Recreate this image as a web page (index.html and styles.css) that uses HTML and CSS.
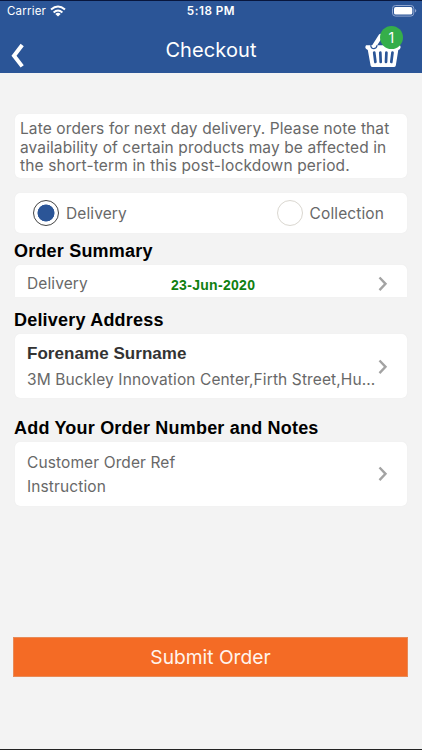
FILE: index.html
```html
<!DOCTYPE html>
<html lang="en">
<head>
<meta charset="utf-8">
<title>Checkout</title>
<link rel="stylesheet" href="styles.css">
</head>
<body>
<header class="header">
  <div class="status">
    <div class="carrier"><span class="carrier-name">Carrier</span>
      <svg class="wifi" viewBox="0 0 16 12" width="16" height="12"><g fill="none" stroke="#fff" stroke-width="2"><path d="M1 4.6Q8-1.7 15 4.6"/><path d="M3.6 7.4Q8 3.5 12.4 7.4"/></g><path d="M8 11.6 5.3 8.9Q8 6.8 10.7 8.9Z" fill="#fff"/></svg>
    </div>
    <span class="time">5:18 PM</span>
    <svg class="battery" viewBox="0 0 25 12" width="25" height="12"><rect x=".5" y=".5" width="21.3" height="10.6" rx="3" fill="none" stroke="#8fa5cf"/><rect x="2" y="2" width="18.3" height="7.6" rx="1.7" fill="#fff"/><path d="M23 4q1.3.6 1.3 1.8T23 7.6Z" fill="#8fa5cf"/></svg>
  </div>
  <nav class="nav">
    <svg class="back" viewBox="0 0 14 26" width="14" height="26"><path d="M11.2 2 3 12.7l8.2 10.7" fill="none" stroke="#fff" stroke-width="4"/></svg>
    <h1 class="title">Checkout</h1>
    <div class="basket">
      <svg viewBox="0 0 38 36" width="38" height="36"><path d="M2 13.200h34q1.800 3.300-1.700 4.800l-2.500 15.400Q31.500 35 29.800 35H8.600Q7 35 6.600 33.400L3.800 18Q0 16.300 2 13.200Z" fill="#fff"/><path d="M9.800 14.600 16.600 4" stroke="#fff" stroke-width="4.200" stroke-linecap="round"/><path d="M6.700 13.200q.3 3.500 3.300 3.400 2.800-.3 3-3.400" fill="none" stroke="#2b5597" stroke-width="1.300"/><path d="m10.200 20.500 1.200 9.500M16.300 20.500l.4 9.500M22.400 20.500l-.4 9.500M28.500 20.500l-1.200 9.500" stroke="#2b5597" stroke-width="2.700" stroke-linecap="round"/></svg>
      <span class="badge">1</span>
    </div>
  </nav>
</header>
<main class="content">
  <p class="card notice">Late orders for next day delivery. Please note that<br>availability of certain products may be affected in<br><span class="last">the short-term in this post-lockdown period.</span></p>
  <div class="card options">
    <div class="option"><span class="radio selected"></span><span>Delivery</span></div>
    <div class="option"><span class="radio"></span><span>Collection</span></div>
  </div>
  <h2 class="heading h-summary">Order Summary</h2>
  <div class="card row summary">
    <span class="label">Delivery</span><b class="date">23-Jun-2020</b>
    <svg class="chevron" viewBox="0 0 10 16" width="10" height="16"><path d="m1.500 1.500 6 6.300-6 6.300" /></svg>
  </div>
  <h2 class="heading h-address">Delivery Address</h2>
  <div class="card row address">
    <div class="lines"><b class="name">Forename Surname</b><span class="street">3M Buckley Innovation Center,Firth Street,Hu...</span></div>
    <svg class="chevron" viewBox="0 0 10 16" width="10" height="16"><path d="m1.500 1.500 6 6.300-6 6.300" /></svg>
  </div>
  <h2 class="heading h-notes">Add Your Order Number and Notes</h2>
  <div class="card row notes">
    <div class="lines"><span>Customer Order Ref</span><span>Instruction</span></div>
    <svg class="chevron" viewBox="0 0 10 16" width="10" height="16"><path d="m1.500 1.500 6 6.300-6 6.300" /></svg>
  </div>
  <button class="submit">Submit Order</button>
</main>
</body>
</html>
```
FILE: styles.css
```css
* { box-sizing: border-box; margin: 0; padding: 0; }
body { width: 422px; height: 750px; overflow: hidden; background: #f3f3f3; border-bottom: 1px solid #222; font-family: Inter, sans-serif; font-size: 15.5px; letter-spacing: .11px; color: #686868; white-space: nowrap; }
svg { display: block; flex: none; }
.header { height: 73px; background: #2b5597; color: #fff; border-top: 1px solid #08163d; }
.status { display: grid; grid-template-columns: 1fr auto 1fr; height: 20px; align-items: center; padding: 0 5px 0 7px; }
.carrier { display: flex; align-items: center; gap: 4px; font-size: 11.5px; letter-spacing: .2px; }
.time { font-size: 11.7px; font-weight: 600; letter-spacing: .5px; margin-left: -2px; }
.battery { justify-self: end; }
.nav { display: grid; grid-template-columns: 1fr auto 1fr; height: 52px; align-items: center; padding: 5px 18px 0 11px; }
.title { font-size: 20px; font-weight: 400; letter-spacing: .1px; padding: 0 0 0 7px; }
.back { margin-top: 12px; }
.basket { position: relative; justify-self: end; width: 40px; height: 36px; margin-top: 0; }
.badge { position: absolute; left: 16px; top: -6px; width: 23px; height: 23px; border-radius: 50%; background: #35ae4a; font-size: 14px; line-height: 23px; text-align: center; }
.content { display: flex; flex-direction: column; padding: 41px 14px 0 15px; }
.card { background: #fff; border-radius: 5px; width: 392px; box-shadow: 0 0 1px #e3e3e3; }
.notice { height: 64px; padding: 6px 0 0 5px; line-height: 18.7px; }
.last { letter-spacing: .15px; }
.options { display: flex; justify-content: space-between; align-items: center; height: 40px; margin-top: 15px; padding: 0 23px 0 18px; }
.option { display: flex; align-items: center; gap: 7px; }
.radio { width: 26px; height: 26px; border: 1px solid #dad7d0; border-radius: 50%; }
.radio.selected { border-color: #444; background: radial-gradient(circle, #2b5597 8.200px, #fff 8.800px); }
.heading { font: bold 18px/22px "Liberation Sans", sans-serif; letter-spacing: .2px; color: #000; margin-left: -1px; }
.h-summary { margin-top: 7px; }
.row { display: flex; align-items: center; padding: 0 19.5px 0 12px; }
.chevron { margin-left: auto; fill: none; stroke: #a3a3a3; stroke-width: 2.400; }
.summary { height: 32px; margin-top: 3px; padding-top: 5px; border-radius: 5px 5px 0 0; }
.label { width: 144px; }
.date { font: bold 14px "Liberation Sans", sans-serif; letter-spacing: .3px; color: #118011; padding-top: 2px; }
.h-address { margin-top: 12px; }
.address, .notes { height: 64px; margin-top: 3px; }
.address .lines, .notes .lines { display: flex; flex-direction: column; }
.name { font: bold 17px/26px "Liberation Sans", sans-serif; letter-spacing: 0.05px; color: #333; padding-top: 1px; }
.street { line-height: 26px; }
.address .chevron { margin-top: 2px; }
.h-notes { margin-top: 19px; }
.notes .lines { line-height: 24px; padding-top: 1px; }
.submit { width: 395px; height: 40px; margin: 131px 0 0 -2px; border: 1px solid #e88a57; background: #f46b25; color: #fff4ed; font: 400 19.2px Inter, sans-serif; }
```
